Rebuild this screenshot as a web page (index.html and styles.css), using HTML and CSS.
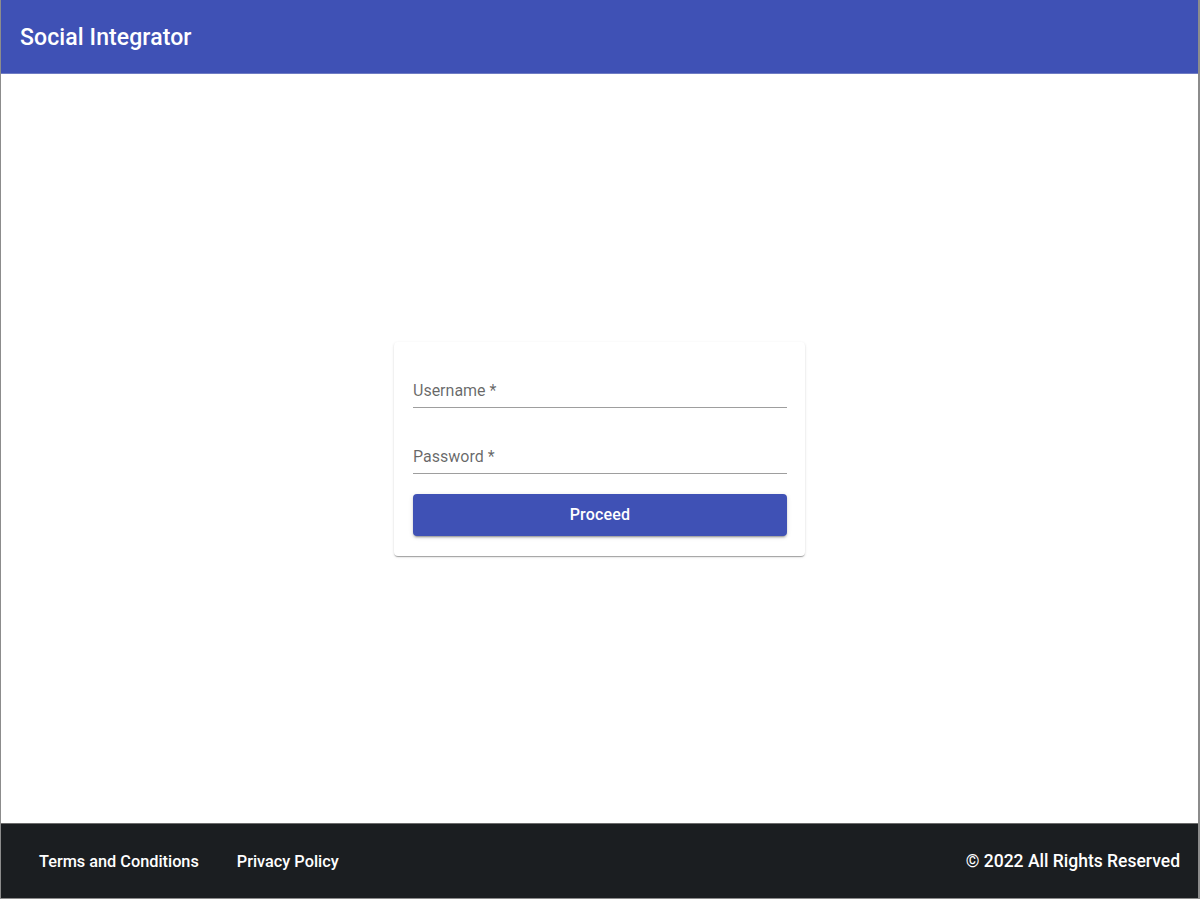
FILE: index.html
```html
<!DOCTYPE html>
<html lang="en">
<head>
<meta charset="utf-8">
<title>Social Integrator</title>
<link rel="stylesheet" href="styles.css">
</head>
<body>
<div class="app">
  <header class="topbar">
    <h1 class="brand">Social Integrator</h1>
  </header>
  <main class="content">
    <form class="card">
      <label class="field">
        <input class="field-input" type="text" placeholder="Username *">
      </label>
      <label class="field field-second">
        <input class="field-input" type="password" placeholder="Password *">
      </label>
      <button class="btn" type="button">Proceed</button>
    </form>
  </main>
  <footer class="footer">
    <nav class="footer-links">
      <a class="footer-link" href="#">Terms and Conditions</a>
      <a class="footer-link" href="#">Privacy Policy</a>
    </nav>
    <span class="copyright">© 2022 All Rights Reserved</span>
  </footer>
</div>
</body>
</html>
```

FILE: styles.css
```css
* { box-sizing: border-box; }

html, body {
  margin: 0;
  height: 100%;
}

body {
  font-family: Roboto, "Liberation Sans", Arial, sans-serif;
  background: #ffffff;
}

.app {
  height: 899px;
  display: flex;
  flex-direction: column;
  border-left: 1px solid #8c8c8c;
  border-right: 2px solid #8c8c8c;
  border-bottom: 1px solid #8c8c8c;
}

.topbar {
  height: 74px;
  flex: none;
  background: #3f51b5;
  display: flex;
  align-items: center;
  padding: 2px 19px 0;
  border-bottom: 1px solid #6f7cc4;
}

.brand {
  margin: 0;
  color: #ffffff;
  font-size: 23px;
  font-weight: 500;
  letter-spacing: 0.1px;
}

.content {
  flex: 1;
  display: flex;
  align-items: center;
  justify-content: center;
}

.card {
  width: 411px;
  padding: 17px 18px 19px 19px;
  background: #ffffff;
  border-radius: 4px;
  box-shadow: 0 2px 1px -1px rgba(0,0,0,0.2), 0 1px 1px 0 rgba(0,0,0,0.14), 0 1px 3px 0 rgba(0,0,0,0.12);
  display: flex;
  flex-direction: column;
}

.field {
  display: block;
  padding-top: 16px;
  border-bottom: 1px solid rgba(0,0,0,0.38);
}

.field-second {
  margin-top: 17px;
}

.field-input {
  display: block;
  width: 100%;
  border: 0;
  outline: none;
  background: transparent;
  font-family: inherit;
  font-size: 16px;
  line-height: 23px;
  height: 32px;
  padding: 4px 0 5px;
  color: rgba(0,0,0,0.87);
}

.field-input::placeholder {
  color: rgba(0,0,0,0.6);
  opacity: 1;
}

.btn {
  margin-top: 20px;
  margin-bottom: 1px;
  height: 42px;
  border: 0;
  border-radius: 4px;
  background: #3f51b5;
  color: #ffffff;
  font-family: inherit;
  font-size: 16px;
  font-weight: 500;
  letter-spacing: 0.2px;
  box-shadow: 0 3px 1px -2px rgba(0,0,0,0.2), 0 2px 2px 0 rgba(0,0,0,0.14), 0 1px 5px 0 rgba(0,0,0,0.12);
  cursor: pointer;
}

.footer {
  height: 75px;
  flex: none;
  background: #1b1e21;
  border-top: 1px solid #6b6b6b;
  display: flex;
  align-items: center;
  justify-content: space-between;
  padding: 0 18px 0 38px;
  color: #ffffff;
  font-size: 16.3px;
  font-weight: 500;
}

.footer-links {
  display: flex;
  gap: 38px;
}

.footer-link {
  color: #ffffff;
  text-decoration: none;
}

.copyright {
  font-size: 17.5px;
}
```
